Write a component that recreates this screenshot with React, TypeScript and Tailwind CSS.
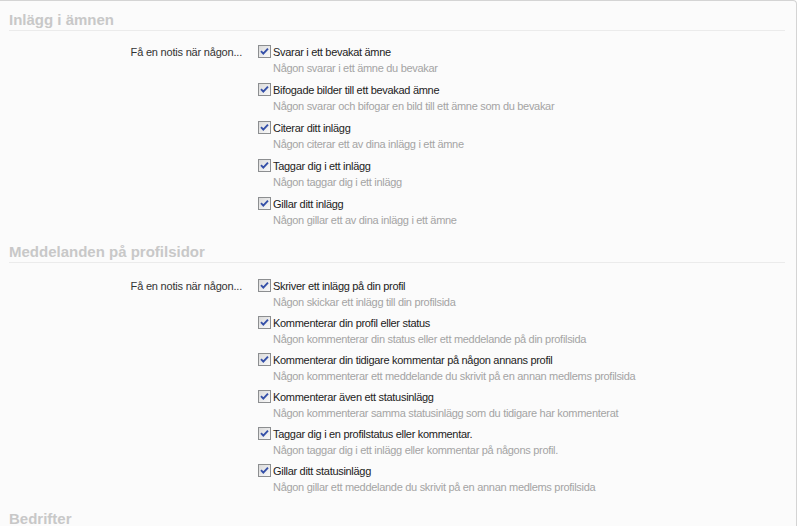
import React from 'react';

type Item = { title: string; desc: string };

const topics: Item[] = [
  { title: 'Svarar i ett bevakat ämne', desc: 'Någon svarar i ett ämne du bevakar' },
  { title: 'Bifogade bilder till ett bevakad ämne', desc: 'Någon svarar och bifogar en bild till ett ämne som du bevakar' },
  { title: 'Citerar ditt inlägg', desc: 'Någon citerar ett av dina inlägg i ett ämne' },
  { title: 'Taggar dig i ett inlägg', desc: 'Någon taggar dig i ett inlägg' },
  { title: 'Gillar ditt inlägg', desc: 'Någon gillar ett av dina inlägg i ett ämne' },
];

const profile: Item[] = [
  { title: 'Skriver ett inlägg på din profil', desc: 'Någon skickar ett inlägg till din profilsida' },
  { title: 'Kommenterar din profil eller status', desc: 'Någon kommenterar din status eller ett meddelande på din profilsida' },
  { title: 'Kommenterar din tidigare kommentar på någon annans profil', desc: 'Någon kommenterar ett meddelande du skrivit på en annan medlems profilsida' },
  { title: 'Kommenterar även ett statusinlägg', desc: 'Någon kommenterar samma statusinlägg som du tidigare har kommenterat' },
  { title: 'Taggar dig i en profilstatus eller kommentar.', desc: 'Någon taggar dig i ett inlägg eller kommentar på någons profil.' },
  { title: 'Gillar ditt statusinlägg', desc: 'Någon gillar ett meddelande du skrivit på en annan medlems profilsida' },
];

const Check = () => (
  <svg width="13" height="13" viewBox="0 0 13 13" className="shrink-0 mt-[1px]">
    <defs>
      <linearGradient id="cbg" x1="0" y1="0" x2="1" y2="1">
        <stop offset="0" stopColor="#d9d9d9" />
        <stop offset="1" stopColor="#fbfbfb" />
      </linearGradient>
    </defs>
    <rect x="0.5" y="0.5" width="12" height="12" fill="url(#cbg)" stroke="#8c8e90" />
    <polyline points="3,6.2 5.3,8.6 10,3.6" fill="none" stroke="#3550a8" strokeWidth="1.9" />
  </svg>
);

const Section = ({ title, items, gap, pt, listPt }: { title: string; items: Item[]; gap: string; pt: string; listPt: string }) => (
  <div className={pt}>
    <h2 className="px-[9px] text-[15px] leading-[18px] font-bold text-[#c8c8c8]">{title}</h2>
    <div className="mt-[1px] ml-[9px] mr-[11px] h-px bg-[#ebebeb]" />
    <div className={`flex ${listPt}`}>
      <div className="w-[242px] text-right text-[11px] leading-4 tracking-[-0.2px] text-[#333]">Få en notis när någon...</div>
      <div className="ml-[16px] flex flex-col">
        {items.map((it) => (
          <div key={it.title} className={gap}>
            <div className="flex items-start gap-[2px]">
              <Check />
              <span className="text-[11px] leading-4 tracking-[-0.3px] text-[#222]">{it.title}</span>
            </div>
            <div className="pl-[15px] text-[11px] leading-4 tracking-[-0.3px] text-[#a4a4a4]">{it.desc}</div>
          </div>
        ))}
      </div>
    </div>
  </div>
);

export default function App() {
  return (
    <div className="min-h-[526px] w-[800px] bg-white" style={{ fontFamily: '"Liberation Sans", Arial, sans-serif' }}>
      <div className="w-[797px] h-[526px] overflow-hidden bg-[#fbfbfb] border-t border-r border-[#d4d4d4] rounded-tr-[4px]">
        <Section title="Inlägg i ämnen" items={topics} gap="mb-[6px]" pt="pt-[10px]" listPt="pt-[13px]" />
        <Section title="Meddelanden på profilsidor" items={profile} gap="mb-[5px]" pt="pt-[9px]" listPt="pt-[15px]" />
        <div className="pt-[10px]">
          <h2 className="px-[9px] text-[15px] leading-[18px] font-bold text-[#c8c8c8]">Bedrifter</h2>
        </div>
      </div>
    </div>
  );
}
